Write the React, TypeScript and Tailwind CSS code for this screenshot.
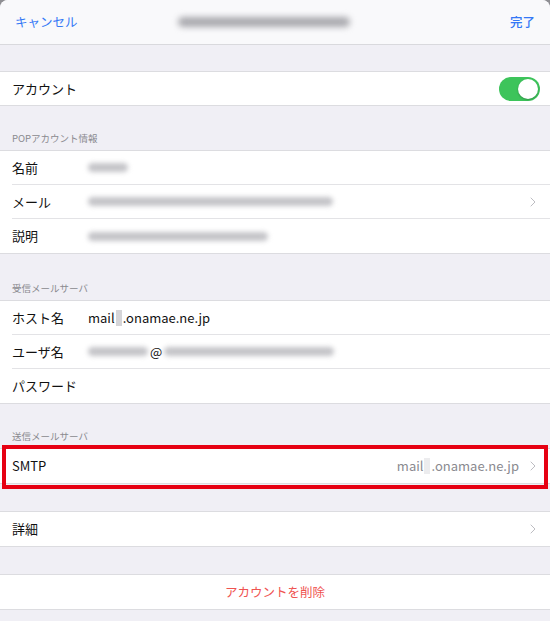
import { ChevronRight } from 'lucide-react';
import type { ReactNode } from 'react';

const font = { fontFamily: '"Noto Sans CJK JP", "Noto Sans", sans-serif' };

function Blur({ w }: { w: number }) {
  return <span className="inline-block h-[9px] rounded-full bg-[#c4c4c8] blur-[2.5px]" style={{ width: w }} />;
}

function Chevron() {
  return <ChevronRight className="h-[16px] w-[16px] text-[#bdbdc2]" strokeWidth={1.5} />;
}

function Row({ label, children, last, right }: { label: string; children?: ReactNode; last?: boolean; right?: ReactNode }) {
  return (
    <div className="flex h-[34px] items-stretch bg-white pl-[12px]">
      <div className={`flex flex-1 items-center pr-[9px] ${last ? '' : 'border-b border-[#e3e3e6]'}`}>
        <span className="w-[76px] shrink-0 text-[13px] text-[#111]">{label}</span>
        <div className="flex flex-1 items-center text-[13px] text-[#111]">{children}</div>
        {right}
      </div>
    </div>
  );
}

function SectionHeader({ title, h }: { title: string; h: string }) {
  return (
    <div className={`flex items-end px-[12px] pb-[5px] ${h}`}>
      <span className="text-[9.5px] text-[#8a8a8f]">{title}</span>
    </div>
  );
}

function Group({ children }: { children: ReactNode }) {
  return <div className="border-y border-[#dcdce0] bg-white">{children}</div>;
}

export default function App() {
  return (
    <div className="h-[621px] w-[550px] overflow-hidden bg-[#8f8f93]" style={font}>
      <div className="h-full rounded-t-[8px] bg-[#f0eff5]">
        <div className="flex h-[45px] items-center rounded-t-[8px] border-b border-[#d9d9dd] bg-[#f9f9fb] px-[15px]">
          <span className="w-[100px] text-[12.5px] text-[#3478f6]">キャンセル</span>
          <div className="flex flex-1 justify-center">
            <span className="mr-[22px] h-[10px] w-[172px] rounded-full bg-[#a9a9ae] blur-[3px]" />
          </div>
          <span className="w-[100px] text-right text-[12.5px] font-medium text-[#3478f6]">完了</span>
        </div>

        <div className="h-[26px]" />
        <Group>
          <div className="flex h-[33px] items-center justify-between pl-[12px] pr-[10px]">
            <span className="text-[13px] text-[#111]">アカウント</span>
            <div className="flex h-[24px] w-[41px] items-center justify-end rounded-full bg-[#3dc45b] px-[2px]">
              <div className="h-[20px] w-[20px] rounded-full bg-white shadow-[0_1px_2px_rgba(0,0,0,0.25)]" />
            </div>
          </div>
        </Group>

        <SectionHeader title="POPアカウント情報" h="h-[44px]" />
        <Group>
          <Row label="名前">
            <Blur w={40} />
          </Row>
          <Row label="メール" right={<Chevron />}>
            <Blur w={245} />
          </Row>
          <Row label="説明" last>
            <Blur w={180} />
          </Row>
        </Group>

        <SectionHeader title="受信メールサーバ" h="h-[46px]" />
        <Group>
          <Row label="ホスト名">
            <span>mail</span>
            <span className="mx-[1px] inline-block h-[16px] w-[6px] bg-[#d5d5d8]" />
            <span>.onamae.ne.jp</span>
          </Row>
          <Row label="ユーザ名">
            <Blur w={60} />
            <span className="mx-[2px]">@</span>
            <Blur w={170} />
          </Row>
          <Row label="パスワード" last />
        </Group>

        <SectionHeader title="送信メールサーバ" h="h-[44px]" />
        <div className="relative">
          <Group>
            <Row label="SMTP" last right={<Chevron />}>
              <span className="ml-auto mr-[6px] flex items-center text-[#8a8a8f]">
                <span>mail</span>
                <span className="mx-[1px] inline-block h-[16px] w-[6px] bg-[#ececee]" />
                <span>.onamae.ne.jp</span>
              </span>
            </Row>
          </Group>
          <div className="pointer-events-none absolute -top-[3px] left-[2px] h-[44px] w-[546px] border-4 border-[#e60012]" />
        </div>

        <div className="h-[27px]" />
        <Group>
          <Row label="詳細" last right={<Chevron />} />
        </Group>

        <div className="h-[27px]" />
        <Group>
          <div className="flex h-[34px] items-center justify-center">
            <span className="text-[12.5px] text-[#ef5350]">アカウントを削除</span>
          </div>
        </Group>
      </div>
    </div>
  );
}
